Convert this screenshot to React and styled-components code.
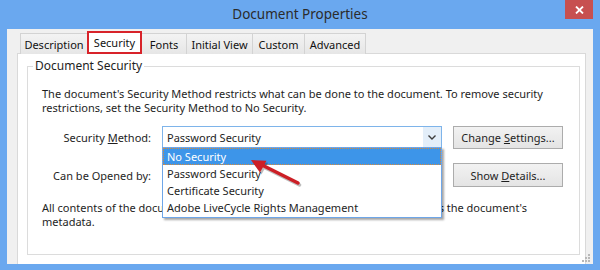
import React from "react";
import styled, { createGlobalStyle } from "styled-components";

const GlobalStyle = createGlobalStyle`
  html, body {
    margin: 0;
    padding: 0;
  }
  body {
    font-family: "Noto Sans", "Liberation Sans", sans-serif;
    color: #1e1e1e;
  }
`;

const Window = styled.div`
  position: relative;
  width: 600px;
  height: 270px;
  box-sizing: border-box;
  padding: 0 7px 6px 7px;
  background: #6aa8ef;
  display: flex;
  flex-direction: column;
  overflow: hidden;
`;

const TitleBar = styled.div`
  flex: none;
  height: 29px;
  display: grid;
  grid-template-columns: 28px 1fr 28px;
  align-items: start;
`;

const Title = styled.div`
  grid-column: 2;
  text-align: center;
  font-size: 13.5px;
  line-height: 28px;
  color: #2b2b2b;
`;

const CloseButton = styled.div`
  grid-column: 3;
  height: 19px;
  background: #c75050;
  color: #fff;
  display: flex;
  align-items: center;
  justify-content: center;
`;

const Panel = styled.div`
  position: relative;
  flex: 1;
  background: #f0f0f0;
  padding: 3px 7px 0 10px;
  display: flex;
  flex-direction: column;
`;

const TabStrip = styled.div`
  display: flex;
  align-items: flex-end;
  height: 22px;
  padding-left: 4px;
  margin-bottom: -1px;
  position: relative;
  z-index: 1;
`;

const Tab = styled.div`
  box-sizing: border-box;
  width: ${(p) => p.$w}px;
  height: ${(p) => (p.$active ? 23 : 21)}px;
  margin-left: -1px;
  display: flex;
  align-items: center;
  justify-content: center;
  font-size: 11px;
  color: #111;
  background: ${(p) =>
    p.$active ? "#fff" : "linear-gradient(#f3f3f3, #e6e6e6)"};
  border: ${(p) => (p.$active ? "2px solid #d8232a" : "1px solid #d3d3d3")};
  border-bottom: ${(p) => (p.$active ? "2px solid #d8232a" : "none")};
  position: relative;
  z-index: ${(p) => (p.$active ? 2 : 0)};
  padding-top: ${(p) => (p.$active ? 0 : 1)}px;
`;

const Page = styled.div`
  flex: 1;
  background: #fff;
  border: 1px solid #d9d9d9;
  border-bottom: none;
  padding: 5px 5px 9px 9px;
  display: flex;
`;

const GroupBox = styled.fieldset`
  flex: 1;
  margin: 0;
  padding: 0;
  border: 1px solid #dcdcdc;
  min-width: 0;
`;

const GroupLabel = styled.legend`
  margin-left: 5px;
  padding: 0 2px;
  font-size: 12px;
  line-height: 14px;
`;

const Content = styled.div`
  position: relative;
  padding: 14px 14px 0 14px;
  font-size: 11px;
`;

const Paragraph = styled.p`
  margin: ${(p) => p.$top || 0}px 0 0 0;
  line-height: 14px;
  white-space: nowrap;
`;

const Form = styled.div`
  margin-top: 11px;
  display: grid;
  grid-template-columns: 109px 280px 110px;
  grid-template-rows: 23px 24px;
  column-gap: 11px;
  row-gap: 14px;
  align-items: center;
`;

const FieldLabel = styled.div`
  text-align: right;
`;

const Combo = styled.div`
  position: relative;
  height: 22px;
  box-sizing: border-box;
  border: 1px solid #7eb4ea;
  background: #fff;
  display: flex;
  align-self: start;
`;

const ComboValue = styled.div`
  flex: 1;
  padding-left: 4px;
  display: flex;
  align-items: center;
`;

const ComboArrow = styled.div`
  width: 18px;
  background: #e3eef9;
  display: flex;
  align-items: center;
  justify-content: center;
`;

const DropList = styled.ul`
  position: absolute;
  top: 100%;
  left: -1px;
  right: -1px;
  margin: 0;
  padding: 0 0 1px 0;
  list-style: none;
  background: #fff;
  border: 1px solid #6ea6e8;
  box-shadow: 2px 2px 2px rgba(0, 0, 0, 0.35);
  z-index: 3;
`;

const DropItem = styled.li`
  height: 17px;
  box-sizing: border-box;
  padding-left: 3px;
  display: flex;
  align-items: center;
  background: ${(p) => (p.$selected ? "#3d95e9" : "transparent")};
  color: ${(p) => (p.$selected ? "#fff" : "#1e1e1e")};
  border: 1px dotted ${(p) => (p.$selected ? "#d98b3a" : "transparent")};
`;

const Button = styled.div`
  box-sizing: border-box;
  height: ${(p) => p.$h}px;
  border: 1px solid #acacac;
  background: linear-gradient(#f2f2f2, #e4e4e4);
  display: flex;
  align-items: center;
  justify-content: center;
`;

const Grip = styled.svg`
  position: absolute;
  right: 3px;
  bottom: 2px;
`;

const Pointer = styled.svg`
  position: absolute;
  left: 240px;
  top: 150px;
  z-index: 5;
  overflow: visible;
`;

const tabs = [
  { label: "Description", w: 68 },
  { label: "Security", w: 55, active: true },
  { label: "Fonts", w: 46 },
  { label: "Initial View", w: 67 },
  { label: "Custom", w: 53 },
  { label: "Advanced", w: 62 },
];

const options = [
  "No Security",
  "Password Security",
  "Certificate Security",
  "Adobe LiveCycle Rights Management",
];

export default function App() {
  return (
    <>
      <GlobalStyle />
      <Window>
        <TitleBar>
          <Title>Document Properties</Title>
          <CloseButton>
            <svg width="9" height="8" viewBox="0 0 9 8">
              <path d="M1 0.5 L8 7.5 M8 0.5 L1 7.5" stroke="#fff" strokeWidth="1.8" />
            </svg>
          </CloseButton>
        </TitleBar>
        <Panel>
          <TabStrip>
            {tabs.map((t) => (
              <Tab key={t.label} $w={t.w} $active={t.active}>
                {t.label}
              </Tab>
            ))}
          </TabStrip>
          <Page>
            <GroupBox>
              <GroupLabel>Document Security</GroupLabel>
              <Content>
                <Paragraph>
                  The document's Security Method restricts what can be done to the
                  document. To remove security
                </Paragraph>
                <Paragraph>
                  restrictions, set the Security Method to No Security.
                </Paragraph>
                <Form>
                  <FieldLabel>
                    Security <u>M</u>ethod:
                  </FieldLabel>
                  <Combo>
                    <ComboValue>Password Security</ComboValue>
                    <ComboArrow>
                      <svg width="8" height="5" viewBox="0 0 8 5">
                        <path d="M0.5 0.5 L4 4 L7.5 0.5" fill="none" stroke="#3c3c3c" strokeWidth="1.4" />
                      </svg>
                    </ComboArrow>
                    <DropList>
                      {options.map((o, i) => (
                        <DropItem key={o} $selected={i === 0}>
                          {o}
                        </DropItem>
                      ))}
                    </DropList>
                  </Combo>
                  <Button $h={23}>
                    <span>
                      Change <u>S</u>ettings...
                    </span>
                  </Button>
                  <FieldLabel>Can be Opened by:</FieldLabel>
                  <div />
                  <Button $h={24}>
                    <span>
                      Show <u>D</u>etails...
                    </span>
                  </Button>
                </Form>
                <Paragraph $top={14}>
                  All contents of the document are encrypted and search engines
                  cannot access the document's
                </Paragraph>
                <Paragraph>metadata.</Paragraph>
              </Content>
            </GroupBox>
          </Page>
          <Grip width="8" height="8" viewBox="0 0 8 8">
            <g fill="#b8b8b8">
              <rect x="6" y="0" width="2" height="2" />
              <rect x="3" y="3" width="2" height="2" />
              <rect x="6" y="3" width="2" height="2" />
              <rect x="0" y="6" width="2" height="2" />
              <rect x="3" y="6" width="2" height="2" />
              <rect x="6" y="6" width="2" height="2" />
            </g>
          </Grip>
        </Panel>
        <Pointer width="70" height="40" viewBox="240 150 70 40">
          <g transform="translate(1.5,2)" opacity="0.25">
            <line x1="298" y1="183" x2="262" y2="165" stroke="#000" strokeWidth="3.5" strokeLinecap="round" />
            <polygon points="251,160 266.5,160.8 260,172.5" fill="#000" />
          </g>
          <line x1="298" y1="183" x2="262" y2="165" stroke="#cc1f26" strokeWidth="3.5" strokeLinecap="round" />
          <polygon points="251,160 266.5,160.8 260,172.5" fill="#cc1f26" />
        </Pointer>
      </Window>
    </>
  );
}
